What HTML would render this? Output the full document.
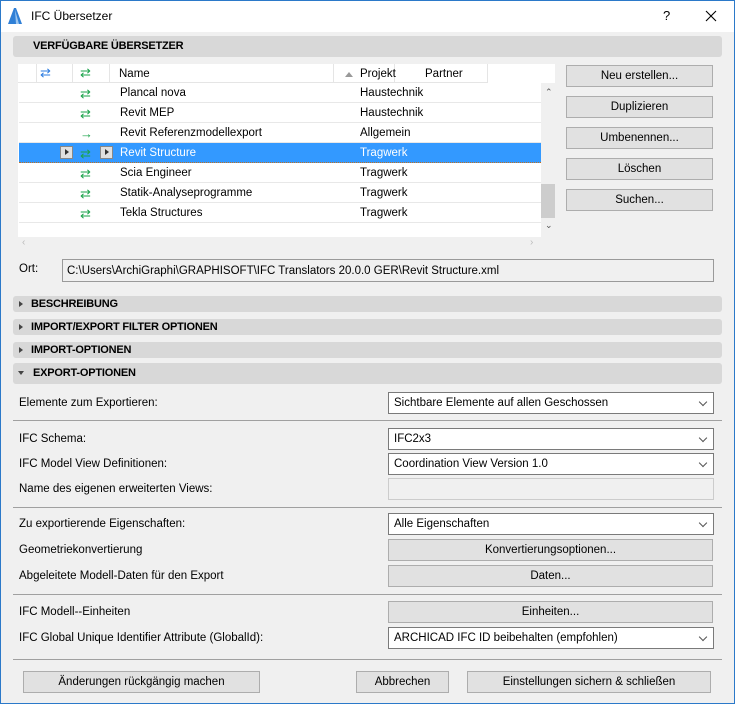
<!DOCTYPE html>
<html><head><meta charset="utf-8"><style>
*{box-sizing:border-box;margin:0;padding:0}
body{width:735px;height:704px;overflow:hidden;background:#f0f0f0;font-family:"Liberation Sans",sans-serif;font-size:11.5px;color:#000;position:relative}
.a{position:absolute;white-space:nowrap}
.win{position:absolute;left:0;top:0;width:735px;height:704px;border:1px solid #2b79c9;pointer-events:none}
.title{position:absolute;left:0;top:0;width:735px;height:32px;background:#fff}
.sec{position:absolute;left:13px;width:709px;background:#d8d8d8;border-radius:3px;font-weight:bold;font-size:11px;letter-spacing:-0.2px}
.btn{position:absolute;background:#e1e1e1;border:1px solid #adadad;text-align:center;line-height:21px;height:22px}
.dd{position:absolute;left:388px;width:326px;height:22px;background:#fff;border:1px solid #7a7a7a;line-height:21px;padding-left:5px}
.dd:after{content:"";position:absolute;right:7px;top:6px;width:5px;height:5px;border-right:1px solid #555;border-bottom:1px solid #555;transform:rotate(45deg)}
.lbl{position:absolute;left:19px}
.sep{position:absolute;left:13px;width:709px;height:1px;background:#a0a0a0}
.row{position:absolute;left:19px;width:522px;height:20px;border-bottom:1px solid #e8e8e8;background:#fff;line-height:21px}
.row .n{position:absolute;left:101px}.row .p{position:absolute;left:341px}
.row .ar{position:absolute;left:61px;top:0;color:#1aa34a;font-size:13px}
.tri{display:inline-block;width:0;height:0;border-left:4px solid #444;border-top:3.5px solid transparent;border-bottom:3.5px solid transparent;margin-right:8px;vertical-align:middle}
</style></head><body>
<div class="title"></div>
<svg class="a" style="left:6px;top:7px" width="18" height="18"><path d="M2 17 L8 1 L10 1 L16 17 Z" fill="#2f7fd6"/><path d="M9 3 L13 17 L10 17 Z" fill="#9cc6f0"/></svg>
<div class="a" style="left:31px;top:9px;font-size:12px">IFC Übersetzer</div>
<div class="a" style="left:663px;top:8px;font-size:13px">?</div>
<svg class="a" style="left:705px;top:10px" width="12" height="12"><path d="M1 1L11 11M11 1L1 11" stroke="#000" stroke-width="1.1"/></svg>

<div class="sec" style="top:36px;height:21px;line-height:21px;padding-left:20px">VERFÜGBARE ÜBERSETZER</div>

<div class="a" style="left:18px;top:64px;width:537px;height:173px;background:#fff"></div>
<div class="a" style="left:18px;top:64px;width:470px;height:19px;background:#fff;border-bottom:1px solid #e5e5e5"></div>
<div class="a" style="left:36px;top:64px;width:1px;height:19px;background:#e5e5e5"></div>
<div class="a" style="left:72px;top:64px;width:1px;height:19px;background:#e5e5e5"></div>
<div class="a" style="left:109px;top:64px;width:1px;height:19px;background:#e5e5e5"></div>
<div class="a" style="left:333px;top:64px;width:1px;height:19px;background:#e5e5e5"></div>
<div class="a" style="left:394px;top:64px;width:1px;height:19px;background:#e5e5e5"></div>
<div class="a" style="left:487px;top:64px;width:1px;height:19px;background:#e5e5e5"></div>
<div class="a" style="left:40px;top:65px;color:#2b7be0;font-size:13px">⇄</div>
<div class="a" style="left:80px;top:65px;color:#1aa34a;font-size:13px">⇄</div>
<div class="a" style="left:119px;top:68px">Name</div>
<div class="a" style="left:345px;top:72px;border-left:4px solid transparent;border-right:4px solid transparent;border-bottom:5px solid #999"></div>
<div class="a" style="left:360px;top:68px">Projekt</div>
<div class="a" style="left:425px;top:68px">Partner</div>

<div class="row" style="top:83px"><span class="ar">⇄</span><span class="n">Plancal nova</span><span class="p">Haustechnik</span></div>
<div class="row" style="top:103px"><span class="ar">⇄</span><span class="n">Revit MEP</span><span class="p">Haustechnik</span></div>
<div class="row" style="top:123px"><span class="ar">→</span><span class="n">Revit Referenzmodellexport</span><span class="p">Allgemein</span></div>
<div class="row" style="top:143px;background:#3399ff;color:#fff;border-bottom:1px dotted #c07020"><span class="a" style="left:41px;top:3px;width:13px;height:13px;background:#e0e0e0;border:1px solid #888"><span class="a" style="left:4px;top:2px;border-left:4px solid #333;border-top:3.5px solid transparent;border-bottom:3.5px solid transparent"></span></span><span class="ar">⇄</span><span class="a" style="left:81px;top:3px;width:13px;height:13px;background:#e0e0e0;border:1px solid #888"><span class="a" style="left:4px;top:2px;border-left:4px solid #333;border-top:3.5px solid transparent;border-bottom:3.5px solid transparent"></span></span><span class="n">Revit Structure</span><span class="p">Tragwerk</span></div>
<div class="row" style="top:163px"><span class="ar">⇄</span><span class="n">Scia Engineer</span><span class="p">Tragwerk</span></div>
<div class="row" style="top:183px"><span class="ar">⇄</span><span class="n">Statik-Analyseprogramme</span><span class="p">Tragwerk</span></div>
<div class="row" style="top:203px"><span class="ar">⇄</span><span class="n">Tekla Structures</span><span class="p">Tragwerk</span></div>
<div class="a" style="left:541px;top:83px;width:14px;height:154px;background:#f0f0f0"></div>
<div class="a" style="left:541px;top:184px;width:14px;height:34px;background:#cdcdcd"></div>
<div class="a" style="left:545px;top:87px;font-size:9px;color:#555">⌃</div>
<div class="a" style="left:545px;top:220px;font-size:9px;color:#555">⌄</div>
<div class="a" style="left:18px;top:237px;width:537px;height:13px;background:#f0f0f0"></div>
<div class="a" style="left:22px;top:237px;color:#bbb;font-size:10px">‹</div>
<div class="a" style="left:530px;top:237px;color:#bbb;font-size:10px">›</div>

<div class="btn" style="left:566px;top:65px;width:147px">Neu erstellen...</div>
<div class="btn" style="left:566px;top:96px;width:147px">Duplizieren</div>
<div class="btn" style="left:566px;top:127px;width:147px">Umbenennen...</div>
<div class="btn" style="left:566px;top:158px;width:147px">Löschen</div>
<div class="btn" style="left:566px;top:189px;width:147px">Suchen...</div>

<div class="a" style="left:19px;top:263px">Ort:</div>
<div class="a" style="left:62px;top:259px;width:652px;height:23px;border:1px solid #9a9a9a;background:#f0f0f0;line-height:22px;padding-left:4px">C:\Users\ArchiGraphi\GRAPHISOFT\IFC Translators 20.0.0 GER\Revit Structure.xml</div>

<div class="sec" style="top:296px;height:16px;line-height:16px;padding-left:6px"><span class="tri"></span>BESCHREIBUNG</div>
<div class="sec" style="top:319px;height:16px;line-height:16px;padding-left:6px"><span class="tri"></span>IMPORT/EXPORT FILTER OPTIONEN</div>
<div class="sec" style="top:342px;height:16px;line-height:16px;padding-left:6px"><span class="tri"></span>IMPORT-OPTIONEN</div>
<div class="sec" style="top:363px;height:21px;line-height:21px;padding-left:6px"><span class="a" style="left:5px;top:8px;border-top:4px solid #444;border-left:3.5px solid transparent;border-right:3.5px solid transparent"></span><span style="margin-left:14px">EXPORT-OPTIONEN</span></div>

<div class="lbl" style="top:397px">Elemente zum Exportieren:</div>
<div class="dd" style="top:392px">Sichtbare Elemente auf allen Geschossen</div>
<div class="sep" style="top:420px"></div>
<div class="lbl" style="top:433px">IFC Schema:</div>
<div class="dd" style="top:428px">IFC2x3</div>
<div class="lbl" style="top:458px">IFC Model View Definitionen:</div>
<div class="dd" style="top:453px">Coordination View Version 1.0</div>
<div class="lbl" style="top:483px">Name des eigenen erweiterten Views:</div>
<div class="a" style="left:388px;top:478px;width:326px;height:22px;border:1px solid #ccc;background:#f0f0f0"></div>
<div class="sep" style="top:507px"></div>
<div class="lbl" style="top:518px">Zu exportierende Eigenschaften:</div>
<div class="dd" style="top:513px">Alle Eigenschaften</div>
<div class="lbl" style="top:544px">Geometriekonvertierung</div>
<div class="btn" style="left:388px;top:539px;width:325px">Konvertierungsoptionen...</div>
<div class="lbl" style="top:570px">Abgeleitete Modell-Daten für den Export</div>
<div class="btn" style="left:388px;top:565px;width:325px">Daten...</div>
<div class="sep" style="top:594px"></div>
<div class="lbl" style="top:606px">IFC Modell--Einheiten</div>
<div class="btn" style="left:388px;top:601px;width:325px">Einheiten...</div>
<div class="lbl" style="top:632px">IFC Global Unique Identifier Attribute (GlobalId):</div>
<div class="dd" style="top:627px">ARCHICAD IFC ID beibehalten (empfohlen)</div>
<div class="sep" style="top:659px"></div>
<div class="btn" style="left:23px;top:671px;width:237px">Änderungen rückgängig machen</div>
<div class="btn" style="left:356px;top:671px;width:93px">Abbrechen</div>
<div class="btn" style="left:467px;top:671px;width:244px">Einstellungen sichern &amp; schließen</div>
<div class="win"></div>
</body></html>
